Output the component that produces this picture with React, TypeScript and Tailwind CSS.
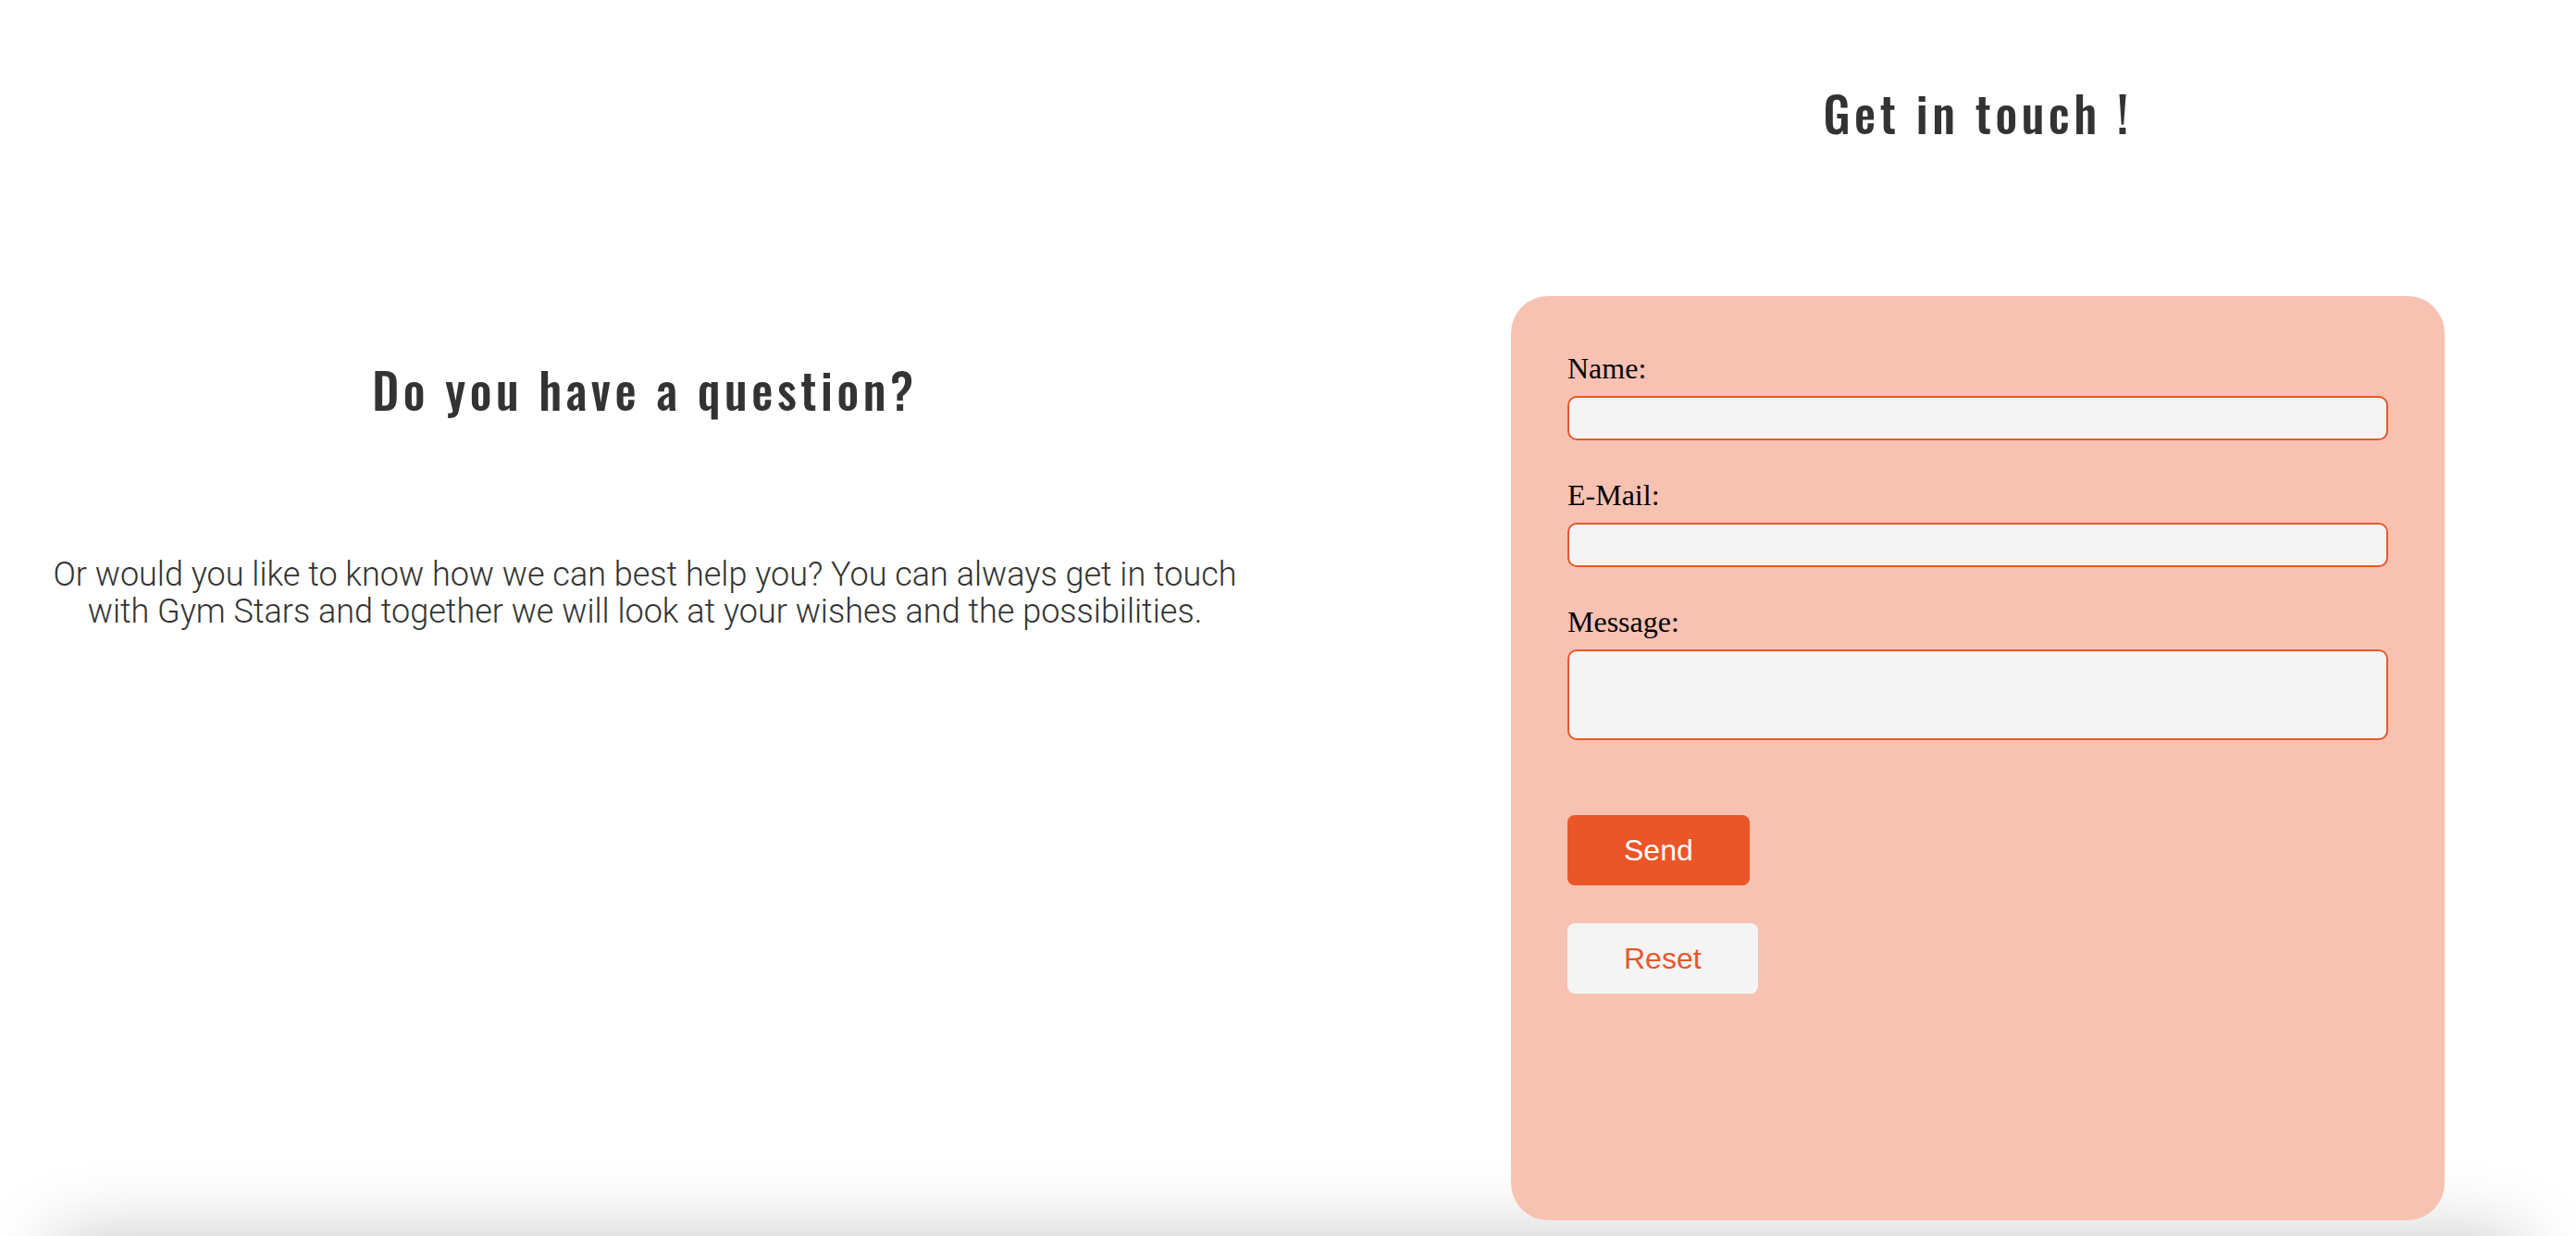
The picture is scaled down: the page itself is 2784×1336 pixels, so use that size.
import React from "react";

const headingFont = {
  fontFamily: '"Oswald", "Liberation Sans Narrow", "DejaVu Sans Condensed", "Liberation Sans", sans-serif',
};

export default function App() {
  return (
    <div className="w-[2784px] bg-white overflow-hidden">
      <section className="flex h-[1336px]">
        <div className="w-[1394px] flex flex-col items-center pt-[395px]">
          <h2
            className="text-[52px] leading-[52px] font-medium text-[#333333] tracking-[0.088em]"
            style={headingFont}
          >
            Do you have a question?
          </h2>
          <p className="mt-[154px] w-[1320px] text-center text-[36px] leading-[40px] font-light text-[#333333] font-['Roboto',sans-serif]">
            Or would you like to know how we can best help you? You can always get in touch with Gym Stars and together we will look at your wishes and the possibilities.
          </p>
        </div>
        <div className="flex-1 pl-[239px]">
          <div className="w-[1009px] pt-[96px]">
            <h2
              className="text-center text-[52px] leading-[52px] font-medium text-[#333333] tracking-[0.088em]"
              style={headingFont}
            >
              Get in touch !
            </h2>
            <form className="mt-[172px] h-[999px] rounded-[40px] bg-[#f8c2b3] px-[61px] pt-[60px] flex flex-col font-['Liberation_Serif',serif]">
              <label className="block text-[32px] leading-[36px] text-black">Name:</label>
              <input type="text" className="mt-[12px] h-[48px] w-full rounded-[10px] border-2 border-[#eb5629] bg-[#f4f4f4] outline-none" />
              <label className="mt-[41px] block text-[32px] leading-[36px] text-black">E-Mail:</label>
              <input type="email" className="mt-[12px] h-[48px] w-full rounded-[10px] border-2 border-[#eb5629] bg-[#f4f4f4] outline-none" />
              <label className="mt-[41px] block text-[32px] leading-[36px] text-black">Message:</label>
              <textarea className="mt-[12px] h-[98px] w-full resize-none rounded-[10px] border-2 border-[#eb5629] bg-[#f4f4f4] outline-none" />
              <div className="mt-[81px] flex flex-col items-start gap-[41px] font-['Liberation_Sans',Arial,sans-serif]">
                <button type="button" className="h-[76px] px-[61px] rounded-[8px] bg-[#eb5629] text-white text-[32px] leading-[36px]">
                  Send
                </button>
                <button type="button" className="h-[76px] px-[61px] rounded-[8px] bg-[#f4f4f4] text-[#eb5629] text-[32px] leading-[36px]">
                  Reset
                </button>
              </div>
            </form>
          </div>
        </div>
      </section>
      <footer className="mx-[60px] h-[200px] bg-white shadow-[0_0_80px_rgba(0,0,0,0.22)]" />
    </div>
  );
}
